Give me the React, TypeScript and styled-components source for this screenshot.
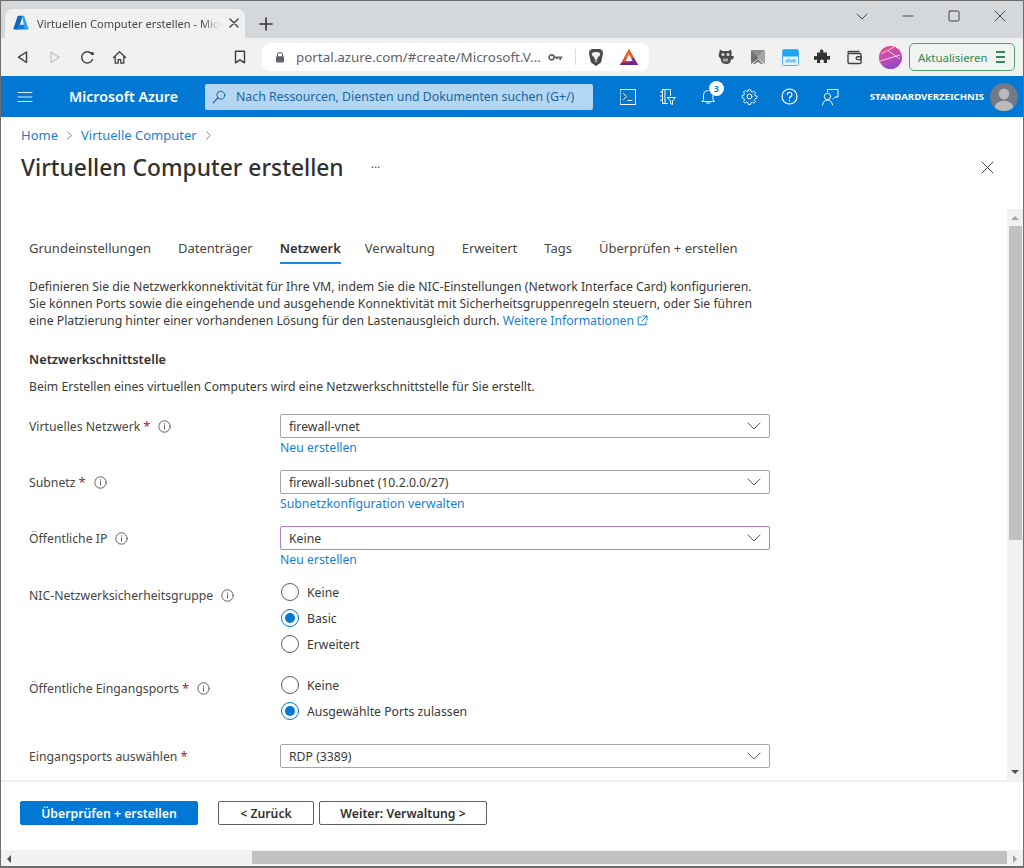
import type { FC, ReactNode } from 'react'
import styled, { createGlobalStyle } from 'styled-components'

const FONT = `'Noto Sans', 'Open Sans', 'Liberation Sans', sans-serif`
const LINK = '#1a80d6'

const GlobalStyle = createGlobalStyle`
  html, body {
    margin: 0;
    padding: 0;
    background: #fff;
  }
  body {
    font-family: ${FONT};
    font-size: 12.25px;
    color: #3b3a39;
  }
  * {
    box-sizing: border-box;
  }
`

const AzureLogo = () => (
  <svg width="16" height="16" viewBox="0 0 16 16">
    <path d="M5.2 .8h4.6L5.2 14.6H.9a.6.6 0 0 1-.5-.8L4.6 1.2a.6.6 0 0 1 .6-.4z" fill="#0a68bd" />
    <path d="M11.6 9.8H5.2l-2 4.8h9.4z" fill="#0f7fd6" />
    <path d="M9.2 .8h1.4a.6.6 0 0 1 .6.4l4.4 12.6a.6.6 0 0 1-.6.8h-3.4z" fill="#2fa3ef" />
  </svg>
)

const Icon: FC<{ size?: number; children: ReactNode; view?: number }> = ({ size = 16, view = 16, children }) => (
  <svg
    width={size}
    height={size}
    viewBox={`0 0 ${view} ${view}`}
    fill="none"
    stroke="currentColor"
    strokeWidth="1"
    strokeLinecap="round"
    strokeLinejoin="round">
    {children}
  </svg>
)

const InfoIcon = () => (
  <InfoWrap>
    <Icon size={13} view={13}>
      <circle cx="6.5" cy="6.5" r="5.7" />
      <path d="M6.5 5.8v3.2M6.5 3.8v.4" />
    </Icon>
  </InfoWrap>
)

const ChevronDown = () => (
  <Icon size={14} view={14}>
    <path d="M1 4l6 6 6-6" />
  </Icon>
)

const Select: FC<{ value: string; focused?: boolean }> = ({ value, focused }) => (
  <SelectBox $focused={focused}>
    <span>{value}</span>
    <SelectArrow>
      <ChevronDown />
    </SelectArrow>
  </SelectBox>
)

const Radio: FC<{ label: string; checked?: boolean }> = ({ label, checked }) => (
  <RadioRow>
    <RadioCircle $checked={checked} />
    <span>{label}</span>
  </RadioRow>
)

const FieldLabel: FC<{ text: string; required?: boolean; info?: boolean }> = ({ text, required, info = true }) => (
  <LabelCell>
    <span>{text}</span>
    {required && <Star>*</Star>}
    {info && <InfoIcon />}
  </LabelCell>
)

const TABS = ['Grundeinstellungen', 'Datenträger', 'Netzwerk', 'Verwaltung', 'Erweitert', 'Tags', 'Überprüfen + erstellen']

export default function App() {
  return (
    <Window>
      <GlobalStyle />
      <TabStrip>
        <BrowserTab>
          <AzureLogo />
          <BrowserTabTitle>Virtuellen Computer erstellen - Micr</BrowserTabTitle>
          <BrowserTabClose>
            <Icon size={10} view={10}>
              <path d="M1 1l8 8M9 1l-8 8" strokeWidth="1.4" />
            </Icon>
          </BrowserTabClose>
        </BrowserTab>
        <NewTab>
          <Icon size={14} view={14}>
            <path d="M7 1v12M1 7h12" strokeWidth="1.6" />
          </Icon>
        </NewTab>
        <WindowControls>
          <WindowButton>
            <Icon size={12} view={12}>
              <path d="M1 4l5 5 5-5" />
            </Icon>
          </WindowButton>
          <WindowButton>
            <Icon size={12} view={12}>
              <path d="M1 6h10" />
            </Icon>
          </WindowButton>
          <WindowButton>
            <Icon size={12} view={12}>
              <rect x="1" y="1" width="10" height="10" rx="1" />
            </Icon>
          </WindowButton>
          <WindowButton>
            <Icon size={12} view={12}>
              <path d="M1 1l10 10M11 1L1 11" />
            </Icon>
          </WindowButton>
        </WindowControls>
      </TabStrip>

      <Toolbar>
        <NavButton>
          <Icon size={14} view={14}>
            <path d="M10.5 2v10.5L2.5 7.2z" strokeWidth="1.4" />
          </Icon>
        </NavButton>
        <NavButton $disabled>
          <Icon size={14} view={14}>
            <path d="M3 2v10.5l8-5.3z" strokeWidth="1.2" />
          </Icon>
        </NavButton>
        <NavButton>
          <Icon size={15} view={15}>
            <path d="M12.5 9.5A5.6 5.6 0 1 1 11.4 3.6" strokeWidth="1.4" />
            <circle cx="12.4" cy="3.6" r="1.6" fill="currentColor" stroke="none" />
          </Icon>
        </NavButton>
        <NavButton>
          <Icon size={15} view={15}>
            <path d="M1.5 7.5L7.5 1.8l6 5.7M3.2 6.4v6.8h3v-3.5h2.6v3.5h3V6.4" strokeWidth="1.3" />
          </Icon>
        </NavButton>
        <BookmarkButton>
          <Icon size={14} view={14}>
            <path d="M2.5 1.2h9v11.6L7 9.8l-4.5 3z" strokeWidth="1.4" />
          </Icon>
        </BookmarkButton>
        <Omnibox>
          <LockGlyph>
            <svg width="10" height="11" viewBox="0 0 10 11">
              <path d="M2.5 4.5V3a2.5 2.5 0 0 1 5 0v1.5" fill="none" stroke="#5f6368" strokeWidth="1.1" />
              <rect x="1" y="4.3" width="8" height="6.2" rx="1" fill="#5f6368" />
            </svg>
          </LockGlyph>
          <UrlText>portal.azure.com/#create/Microsoft.V...</UrlText>
          <KeyGlyph>
            <svg width="15" height="9" viewBox="0 0 15 9">
              <circle cx="3.6" cy="4.3" r="2.5" fill="none" stroke="#5f6368" strokeWidth="1.7" />
              <path d="M6 3.4h8.4v1.8h-1.4v2h-1.6v-2H9.8v1.4H8.4V5.2H6z" fill="#5f6368" />
            </svg>
          </KeyGlyph>
          <OmniDivider />
          <BraveGlyph>
            <svg width="16" height="19" viewBox="0 0 16 19">
              <path
                d="M3.6 1h8.8l1 1.3 1.6.5-.4 1.2.4 1.4-1.7 7.8c-.3 1.1-.8 1.7-1.8 2.4L8 18l-3.5-2.4c-1-.7-1.5-1.3-1.8-2.4L1 5.4 1.4 4 1 2.8l1.6-.5z"
                fill="#4a4a4a"
              />
              <path
                d="M4.6 4.6L8 4l3.4.6.9 1.7-1 2-1.7.7.2 1.5L8 12l-1.8-1.5.2-1.5-1.7-.7-1-2zM6.4 13L8 14l1.6-1-1.6-.7z"
                fill="#f2f2f2"
              />
            </svg>
          </BraveGlyph>
          <BatGlyph>
            <svg width="18" height="16" viewBox="0 0 18 16">
              <path d="M9 0l9 16H0z" fill="#e8472f" />
              <path d="M9 0l5 9H4z" fill="#f0602c" />
              <path d="M18 16H9l2.6-7H14z" fill="#7a2a8f" />
              <path d="M0 16h18l-1.6-2.6H1.6z" fill="#6a2590" />
              <path d="M9 5.5L12.6 12H5.4z" fill="#fff" />
            </svg>
          </BatGlyph>
        </Omnibox>
        <ExtensionGroup>
          <ExtensionButton>
            <svg width="18" height="18" viewBox="0 0 18 18">
              <path
                d="M3 1.5l2.5 1.4h6L14 1.5l.8 4.5-.7 1.8 2.9.5-1 3-2 .2c-.3 2.4-1.2 4.5-5 4.5s-5-2-5-4.7L1.5 8z"
                fill="#4a4a4a"
              />
              <circle cx="6" cy="6.5" r="1.5" fill="#d9d9d9" />
              <circle cx="11" cy="6.5" r="1.5" fill="#d9d9d9" />
              <path d="M6 10.5h5v3H6z" fill="#a5a5a5" />
            </svg>
          </ExtensionButton>
          <ExtensionButton>
            <svg width="16" height="16" viewBox="0 0 16 16">
              <path d="M1 1h14l-7 7z" fill="#8d8d8d" />
              <path d="M1 1l7 7v2l-7 5z" fill="#6f6f6f" />
              <path d="M15 1L8 8v2l7 5z" fill="#a5a5a5" />
              <path d="M3 15l5-4.5 5 4.5-1.6 0L8 12.4 4.6 15z" fill="#5a5a5a" />
            </svg>
          </ExtensionButton>
          <ExtensionButton>
            <svg width="17" height="17" viewBox="0 0 17 17">
              <rect x="0.5" y="0.5" width="16" height="16" rx="1" fill="#e8f4fd" stroke="#4db3f4" />
              <rect x="1" y="1" width="15" height="6.5" fill="#1ea5f2" />
              <path d="M3 12l3-3 3 2 3-1.5 2 1v3H3z" fill="#7cc8f7" />
            </svg>
          </ExtensionButton>
          <ExtensionButton>
            <svg width="16" height="16" viewBox="0 0 16 16">
              <path
                d="M6 1.2a1.9 1.9 0 0 1 3.4 1L9.3 3.5H13v3.6l1.3-.2a1.9 1.9 0 1 1 0 3.7L13 10.4V14H9.6l.2-1.2a1.9 1.9 0 1 0-3.7 0l.2 1.2H3v-3.4l-1.1.2a1.9 1.9 0 1 1 0-3.7L3 7.2V3.5h3.2z"
                fill="#333"
              />
            </svg>
          </ExtensionButton>
          <ExtensionButton>
            <Icon size={17} view={17}>
              <path d="M2 5.5V13a1.5 1.5 0 0 0 1.5 1.5h10.5a1 1 0 0 0 1-1V5.5a1 1 0 0 0-1-1H3.5A1.5 1.5 0 0 1 2 3.5 1 1 0 0 1 3.5 2.5H13" strokeWidth="1.4" />
              <path d="M15 7.8h-3.4a1.4 1.4 0 0 0 0 2.8H15z" strokeWidth="1.4" />
            </Icon>
          </ExtensionButton>
        </ExtensionGroup>
        <ProfileAvatar>
          <svg width="23" height="23" viewBox="0 0 23 23">
            <path d="M2 8L15 1M8 4l13 9M1 15l20-6" stroke="#f3dbe8" strokeWidth="0.9" fill="none" />
          </svg>
        </ProfileAvatar>
        <UpdateButton>
          <span>Aktualisieren</span>
          <UpdateBars>
            <i />
            <i />
            <i />
          </UpdateBars>
        </UpdateButton>
      </Toolbar>

      <AzureBar>
        <HamburgerButton>
          <Icon size={16} view={16}>
            <path d="M1 3.5h14M1 8h14M1 12.5h14" stroke="#dbeaf7" />
          </Icon>
        </HamburgerButton>
        <Brand>Microsoft Azure</Brand>
        <SearchBox>
          <SearchGlyph>
            <Icon size={14} view={14}>
              <circle cx="8.8" cy="5.2" r="4" />
              <path d="M5.8 8L1.2 12.8" strokeWidth="1.2" />
            </Icon>
          </SearchGlyph>
          <span>Nach Ressourcen, Diensten und Dokumenten suchen (G+/)</span>
        </SearchBox>
        <PortalIcons>
          <PortalIcon>
            <Icon size={16} view={16}>
              <rect x="0.5" y="0.5" width="15" height="15" />
              <path d="M3.5 4.5l3 3-3 3M8 11.5h4" />
            </Icon>
          </PortalIcon>
          <PortalIcon>
            <Icon size={18} view={18}>
              <path d="M3.5 1.5h8v6M3.5 1.5v14h5M1.5 4h2M1.5 8h2M1.5 12h2M6 1.5v14" />
              <path d="M8.5 9.5h8l-3 3.5v3.5l-2-1V13z" />
            </Icon>
          </PortalIcon>
          <PortalIcon>
            <Icon size={17} view={17}>
              <path d="M8 2.5c-3 0-4.5 2-4.5 5v4L2 13.5h12.5L13 11.5v-4" />
              <path d="M6.5 15h3.5" />
            </Icon>
            <NotificationBadge>3</NotificationBadge>
          </PortalIcon>
          <PortalIcon>
            <Icon size={17} view={17}>
              <circle cx="8.5" cy="8.5" r="2.4" />
              <path d="M7.2 1h2.6l.4 2.1 1.4.6 1.8-1.2 1.8 1.8-1.2 1.8.6 1.4 2.1.4v2.6l-2.1.4-.6 1.4 1.2 1.8-1.8 1.8-1.8-1.2-1.4.6-.4 2.1H7.2l-.4-2.1-1.4-.6-1.8 1.2-1.8-1.8 1.2-1.8-.6-1.4L.3 9.8V7.2l2.1-.4.6-1.4-1.2-1.8 1.8-1.8 1.8 1.2 1.4-.6z" transform="translate(.85 .85) scale(.9)" />
            </Icon>
          </PortalIcon>
          <PortalIcon>
            <Icon size={17} view={17}>
              <circle cx="8.5" cy="8.5" r="7.5" strokeWidth="1.2" />
              <path d="M6.3 6.6a2.3 2.3 0 1 1 3.4 2c-.8.5-1.2 1-1.2 1.9" strokeWidth="1.2" />
              <path d="M8.5 12.6v.3" strokeWidth="1.4" />
            </Icon>
          </PortalIcon>
          <PortalIcon>
            <Icon size={18} view={18}>
              <path d="M6.5 4V1.5h10.5V9h-3l-2 2" />
              <circle cx="6.5" cy="8.5" r="3.2" />
              <path d="M1.5 17c.3-3 2.2-5 5-5s4.7 2 5 5" />
            </Icon>
          </PortalIcon>
        </PortalIcons>
        <Directory>STANDARDVERZEICHNIS</Directory>
        <UserAvatar>
          <svg width="28" height="28" viewBox="0 0 28 28">
            <circle cx="14" cy="14" r="14" fill="#737a85" />
            <circle cx="14" cy="11" r="5.4" fill="#b9b9b9" />
            <path d="M4.6 24.4c1-4.4 4.5-6.6 9.4-6.6s8.4 2.2 9.4 6.6A14 14 0 0 1 14 28a14 14 0 0 1-9.4-3.6z" fill="#b9b9b9" />
          </svg>
        </UserAvatar>
      </AzureBar>

      <Blade>
        <BladeHeader>
          <Breadcrumb>
            <Crumb>Home</Crumb>
            <CrumbSep>
              <Icon size={9} view={9}>
                <path d="M2.5 .8l4 3.7-4 3.7" />
              </Icon>
            </CrumbSep>
            <Crumb>Virtuelle Computer</Crumb>
            <CrumbSep>
              <Icon size={9} view={9}>
                <path d="M2.5 .8l4 3.7-4 3.7" />
              </Icon>
            </CrumbSep>
          </Breadcrumb>
          <TitleRow>
            <Title>Virtuellen Computer erstellen</Title>
            <More>···</More>
            <BladeClose>
              <Icon size={13} view={13}>
                <path d="M1 1l11 11M12 1L1 12" />
              </Icon>
            </BladeClose>
          </TitleRow>
        </BladeHeader>

        <ScrollRow>
          <Content>
            <Tabs>
              {TABS.map((tab) => (
                <Tab key={tab} $active={tab === 'Netzwerk'}>
                  {tab}
                </Tab>
              ))}
            </Tabs>
            <Intro>
              Definieren Sie die Netzwerkkonnektivität für Ihre VM, indem Sie die NIC-Einstellungen (Network Interface Card) konfigurieren.
              <br />
              Sie können Ports sowie die eingehende und ausgehende Konnektivität mit Sicherheitsgruppenregeln steuern, oder Sie führen
              <br />
              eine Platzierung hinter einer vorhandenen Lösung für den Lastenausgleich durch.{' '}
              <TextLink>
                Weitere Informationen{' '}
                <Icon size={11} view={11}>
                  <path d="M4 2H1.2v7.8H9V7M6 1h4v4M10 1L5 6" />
                </Icon>
              </TextLink>
            </Intro>
            <SectionTitle>Netzwerkschnittstelle</SectionTitle>
            <SectionText>Beim Erstellen eines virtuellen Computers wird eine Netzwerkschnittstelle für Sie erstellt.</SectionText>

            <Form>
              <Field>
                <FieldLabel text="Virtuelles Netzwerk" required />
                <Control>
                  <Select value="firewall-vnet" />
                  <ControlLink>Neu erstellen</ControlLink>
                </Control>
              </Field>
              <Field>
                <FieldLabel text="Subnetz" required />
                <Control>
                  <Select value="firewall-subnet (10.2.0.0/27)" />
                  <ControlLink>Subnetzkonfiguration verwalten</ControlLink>
                </Control>
              </Field>
              <Field>
                <FieldLabel text="Öffentliche IP" />
                <Control>
                  <Select value="Keine" focused />
                  <ControlLink>Neu erstellen</ControlLink>
                </Control>
              </Field>
              <RadioField>
                <FieldLabel text="NIC-Netzwerksicherheitsgruppe" />
                <Control>
                  <Radio label="Keine" />
                  <Radio label="Basic" checked />
                  <Radio label="Erweitert" />
                </Control>
              </RadioField>
              <RadioField>
                <FieldLabel text="Öffentliche Eingangsports" required />
                <Control>
                  <Radio label="Keine" />
                  <Radio label="Ausgewählte Ports zulassen" checked />
                </Control>
              </RadioField>
              <PortsField>
                <FieldLabel text="Eingangsports auswählen" required info={false} />
                <Control>
                  <Select value="RDP (3389)" />
                </Control>
              </PortsField>
            </Form>
          </Content>
          <VScroll>
            <ScrollArrow $dir="up" />
            <VTrack>
              <VThumb />
            </VTrack>
            <ScrollArrow $dir="down" />
          </VScroll>
        </ScrollRow>

        <Footer>
          <PrimaryButton>Überprüfen + erstellen</PrimaryButton>
          <BackButton>&lt; Zurück</BackButton>
          <NextButton>Weiter: Verwaltung &gt;</NextButton>
        </Footer>

        <HScroll>
          <ScrollArrow $dir="left" />
          <HTrack>
            <HThumb />
          </HTrack>
          <ScrollArrow $dir="right" />
        </HScroll>
      </Blade>
    </Window>
  )
}

const Window = styled.div`
  width: 1024px;
  height: 868px;
  display: flex;
  flex-direction: column;
  overflow: hidden;
  border: 1px solid #6e6e6e;
  border-bottom-width: 2px;
`

const TabStrip = styled.div`
  height: 37px;
  flex: none;
  display: flex;
  align-items: flex-end;
  padding-left: 4px;
  background: #d5d8db;
`

const BrowserTab = styled.div`
  width: 240px;
  height: 29px;
  display: flex;
  align-items: center;
  gap: 8px;
  padding: 0 6px 1px 8px;
  background: #f1f1f1;
  border-radius: 8px 8px 0 0;
`

const BrowserTabTitle = styled.span`
  flex: 1;
  overflow: hidden;
  white-space: nowrap;
  font-size: 11.1px;
  color: #45484c;
  -webkit-mask-image: linear-gradient(to right, #000 90%, transparent);
  mask-image: linear-gradient(to right, #000 90%, transparent);
`

const BrowserTabClose = styled.span`
  display: flex;
  color: #3c4043;
`

const NewTab = styled.span`
  display: flex;
  align-self: flex-end;
  margin: 0 0 7px 14px;
  color: #333;
`

const WindowControls = styled.div`
  margin-left: auto;
  align-self: flex-start;
  display: flex;
  color: #444;
`

const WindowButton = styled.span`
  width: 46px;
  height: 30px;
  display: flex;
  align-items: center;
  justify-content: center;
`

const Toolbar = styled.div`
  height: 38px;
  flex: none;
  display: flex;
  align-items: center;
  padding-left: 6px;
  background: #f1f1f1;
`

const NavButton = styled.span<{ $disabled?: boolean }>`
  width: 32px;
  display: flex;
  justify-content: center;
  color: ${(p) => (p.$disabled ? '#c0c2c5' : '#3c4043')};
`

const BookmarkButton = styled(NavButton)`
  margin-left: 89px;
`

const Omnibox = styled.div`
  width: 387px;
  height: 28px;
  margin-left: 6px;
  display: flex;
  align-items: center;
  padding-left: 13px;
  background: #fff;
  border-radius: 8px;
`

const LockGlyph = styled.span`
  display: flex;
  margin-right: 11px;
`

const UrlText = styled.span`
  font-size: 13.4px;
  color: #5f6368;
  white-space: nowrap;
  width: 252px;
`

const KeyGlyph = styled.span`
  display: flex;
`

const OmniDivider = styled.span`
  width: 1px;
  height: 16px;
  margin: 0 12px;
  background: #dcdcdc;
`

const BraveGlyph = styled.span`
  display: flex;
`

const BatGlyph = styled.span`
  display: flex;
  margin-left: 16px;
`

const ExtensionGroup = styled.div`
  display: flex;
  margin-left: 61px;
`

const ExtensionButton = styled.span`
  width: 32px;
  display: flex;
  justify-content: center;
  align-items: center;
  color: #444;
`

const ProfileAvatar = styled.span`
  width: 23px;
  height: 23px;
  margin-left: 9px;
  display: flex;
  border-radius: 50%;
  overflow: hidden;
  background: linear-gradient(160deg, #e24e8f 0%, #c04bb5 50%, #7f45cf 100%);
`

const UpdateButton = styled.span`
  width: 106px;
  height: 28px;
  margin-left: 7px;
  display: flex;
  align-items: center;
  justify-content: space-between;
  padding: 0 9px 0 8px;
  font-size: 11.4px;
  color: #2f8a55;
  background: #f1f5f2;
  border: 1px solid #4f9e70;
  border-radius: 5px;
`

const UpdateBars = styled.span`
  display: flex;
  flex-direction: column;
  gap: 3px;
  i {
    display: block;
    width: 9px;
    height: 2px;
    background: #2f8a55;
  }
`

const AzureBar = styled.div`
  height: 41px;
  flex: none;
  display: flex;
  align-items: center;
  background: #0078d4;
  color: #fff;
`

const HamburgerButton = styled.span`
  width: 16px;
  margin-left: 16px;
  display: flex;
`

const Brand = styled.span`
  margin-left: 36px;
  width: 136px;
  font-size: 14.2px;
  font-weight: 600;
  white-space: nowrap;
`

const SearchBox = styled.div`
  width: 388px;
  height: 26px;
  display: flex;
  align-items: center;
  gap: 10px;
  padding-left: 7px;
  font-size: 12.3px;
  color: #1d659f;
  background: #b3d6f2;
  border-radius: 2px;
  white-space: nowrap;
`

const SearchGlyph = styled.span`
  display: flex;
  color: #1d659f;
`

const PortalIcons = styled.div`
  margin-left: 15px;
  display: flex;
`

const PortalIcon = styled.span`
  position: relative;
  width: 40.3px;
  height: 41px;
  display: flex;
  align-items: center;
  justify-content: center;
  color: #fff;
`

const NotificationBadge = styled.span`
  position: absolute;
  top: 5px;
  right: 5px;
  width: 15px;
  height: 15px;
  display: flex;
  align-items: center;
  justify-content: center;
  font-size: 9px;
  font-weight: 600;
  color: #0078d4;
  background: #fff;
  border-radius: 50%;
`

const Directory = styled.span`
  margin-left: 20px;
  width: 120px;
  font-size: 9.6px;
  font-weight: 700;
  white-space: nowrap;
`

const UserAvatar = styled.span`
  display: flex;
`

const Blade = styled.div`
  flex: 1;
  min-height: 0;
  display: flex;
  flex-direction: column;
  background: #fff;
`

const BladeHeader = styled.div`
  height: 92px;
  flex: none;
  padding: 9px 0 0 20px;
`

const Breadcrumb = styled.div`
  height: 18px;
  display: flex;
  align-items: center;
`

const Crumb = styled.span`
  color: ${LINK};
  font-size: 13px;
`

const CrumbSep = styled.span`
  display: flex;
  margin: 0 7px;
  color: #8a8886;
`

const TitleRow = styled.div`
  margin-top: 6px;
  display: flex;
  align-items: center;
  height: 34px;
`

const Title = styled.h1`
  margin: 0;
  font-size: 22.8px;
  font-weight: 500;
  color: #323130;
  white-space: nowrap;
`

const More = styled.span`
  margin-left: 27px;
  font-size: 12px;
  color: #605e5c;
`

const BladeClose = styled.span`
  margin-left: auto;
  margin-right: 29px;
  display: flex;
  color: #444;
`

const ScrollRow = styled.div`
  flex: 1;
  min-height: 0;
  display: flex;
  border-bottom: 2px solid #f0f0f0;
`

const Content = styled.div`
  flex: 1;
  min-width: 0;
  overflow: hidden;
  padding: 27px 0 0 28px;
`

const Tabs = styled.div`
  display: flex;
  gap: 27px;
  margin-bottom: 14px;
`

const Tab = styled.span<{ $active?: boolean }>`
  height: 28px;
  padding-top: 3px;
  margin-right: ${(p) => (p.$active ? '-3px' : '0')};
  font-size: 13px;
  font-weight: ${(p) => (p.$active ? 600 : 400)};
  white-space: nowrap;
  color: ${(p) => (p.$active ? '#323130' : '#484644')};
  border-bottom: 2px solid ${(p) => (p.$active ? '#1b8ae0' : 'transparent')};
`

const Intro = styled.p`
  margin: 0;
  line-height: 17px;
  white-space: nowrap;
`

const TextLink = styled.span`
  color: ${LINK};
  svg {
    vertical-align: -1px;
  }
`

const SectionTitle = styled.h2`
  margin: 21px 0 0;
  font-size: 12.8px;
  line-height: 18px;
  font-weight: 600;
  color: #323130;
`

const SectionText = styled.p`
  margin: 10px 0 0;
  font-size: 12.15px;
  line-height: 17px;
`

const Form = styled.div`
  margin-top: 19px;
  display: flex;
  flex-direction: column;
`

const Field = styled.div`
  display: grid;
  grid-template-columns: 251px 490px;
  margin-bottom: 12px;
`

const RadioField = styled(Field)`
  margin: -3px 0 18px;
`

const PortsField = styled(Field)`
  margin-top: 2px;
`

const LabelCell = styled.div`
  height: 24px;
  display: flex;
  align-items: center;
  color: #484644;
  white-space: nowrap;
  ${RadioField} & {
    margin-top: 4px;
  }
`

const Star = styled.span`
  margin-left: 3px;
  color: #a4262c;
  font-size: 13px;
`

const InfoWrap = styled.span`
  display: flex;
  margin-left: 8px;
  color: #605e5c;
`

const Control = styled.div`
  display: flex;
  flex-direction: column;
`

const SelectBox = styled.div<{ $focused?: boolean }>`
  height: 24px;
  display: flex;
  align-items: center;
  justify-content: space-between;
  padding: 0 8px 0 8px;
  color: #3b3a39;
  background: #fff;
  border: 1px solid ${(p) => (p.$focused ? '#b27fd0' : '#a8a6a4')};
  border-radius: 2px;
`

const SelectArrow = styled.span`
  display: flex;
  color: #605e5c;
`

const ControlLink = styled.span`
  height: 20px;
  line-height: 20px;
  color: ${LINK};
`

const RadioRow = styled.label`
  height: 26px;
  display: flex;
  align-items: center;
  gap: 8px;
  padding-left: 1px;
`

const RadioCircle = styled.span<{ $checked?: boolean }>`
  width: 18px;
  height: 18px;
  display: flex;
  flex: none;
  align-items: center;
  justify-content: center;
  border: 1px solid ${(p) => (p.$checked ? '#0078d4' : '#605e5c')};
  border-radius: 50%;
  &::after {
    content: '';
    width: 10px;
    height: 10px;
    border-radius: 50%;
    background: ${(p) => (p.$checked ? '#0078d4' : 'transparent')};
  }
`

const VScroll = styled.div`
  width: 16px;
  flex: none;
  display: flex;
  flex-direction: column;
  background: #f1f1f1;
`

const VTrack = styled.div`
  flex: 1;
`

const VThumb = styled.div`
  height: 314px;
  margin-left: 2px;
  width: 13px;
  background: #c1c1c1;
`

const ScrollArrow = styled.span<{ $dir: 'up' | 'down' | 'left' | 'right' }>`
  flex: none;
  width: 16px;
  height: 17px;
  display: flex;
  align-items: center;
  justify-content: center;
  &::after {
    content: '';
    width: 0;
    height: 0;
    border: 4px solid transparent;
    ${(p) => {
      if (p.$dir === 'up') return 'border-bottom-color: #a3a3a3; border-top-width: 0;'
      if (p.$dir === 'down') return 'border-top-color: #505050; border-bottom-width: 0;'
      if (p.$dir === 'left') return 'border-right-color: #505050; border-left-width: 0;'
      return 'border-left-color: #a3a3a3; border-right-width: 0;'
    }}
  }
`

const Footer = styled.div`
  height: 68px;
  flex: none;
  display: flex;
  align-items: center;
  padding: 0 0 6px 19px;
`

const PrimaryButton = styled.button`
  width: 178px;
  height: 24px;
  padding: 0;
  font-family: ${FONT};
  font-size: 12.25px;
  font-weight: 600;
  color: #fff;
  background: #0078d4;
  border: 1px solid #0078d4;
  border-radius: 2px;
`

const BackButton = styled(PrimaryButton)`
  width: 96px;
  margin-left: 20px;
  color: #323130;
  background: #fff;
  border-color: #605e5c;
`

const NextButton = styled(BackButton)`
  width: 168px;
  margin-left: 5px;
`

const HScroll = styled.div`
  height: 16px;
  flex: none;
  display: flex;
  background: #f1f1f1;
`

const HTrack = styled.div`
  flex: 1;
  padding: 1px 0 1px 235px;
`

const HThumb = styled.div`
  height: 13px;
  background: #c1c1c1;
`
